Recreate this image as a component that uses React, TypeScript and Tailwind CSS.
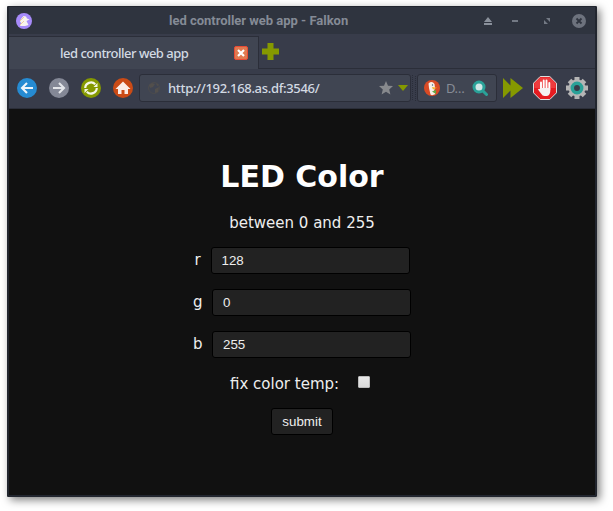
import React from "react";

const Disc = ({ color, children }: { color: string; children: React.ReactNode }) => (
  <svg width="20" height="20" viewBox="0 0 20 20" className="shrink-0">
    <circle cx="10" cy="10" r="10" fill={color} />
    {children}
  </svg>
);

function TitleBar() {
  return (
    <header className="flex h-[27px] shrink-0 items-center bg-[#2f343f] pl-[7px] pr-[9px]">
      <svg width="16" height="16" viewBox="0 0 16 16" className="shrink-0">
        <circle cx="8" cy="8" r="8" fill="#a78bfa" />
        <path d="M5 6 7.500 3 10 3.500 11 5.500 13.500 6.500 10.500 8 12.500 12 9 13H4l1.500-3L4 9z" fill="#f8f4ee" />
        <path d="m4 8 4-4M4 12l4-4" stroke="#efcf9d" />
      </svg>
      <h2 className="ml-[137px] w-[184px] whitespace-nowrap font-['Roboto',sans-serif] text-[13px] font-bold leading-[27px] tracking-[-0.02px] text-[#858b96]">
        led controller web app - Falkon
      </h2>
      <div className="ml-auto flex items-center text-[#737984]">
        <svg width="8" height="8" viewBox="0 0 8 8" fill="#8a909b"><path d="M4 0 8 5H0zM0 6h8v2H0z" /></svg>
        <svg width="6" height="8" viewBox="0 0 6 8" fill="currentColor" className="ml-5"><path d="M0 3h6v2H0z" /></svg>
        <svg width="6" height="6" viewBox="0 0 6 6" fill="currentColor" className="ml-[26px]"><path d="M2 0h4v4zM0 2v4h4z" /></svg>
        <svg width="14" height="14" viewBox="0 0 14 14" className="ml-[22px]">
          <circle cx="7" cy="7" r="7" fill="#6d727d" />
          <path d="m4.500 4.500 5 5m0-5-5 5" stroke="#2f343f" strokeWidth="1.800" />
        </svg>
      </div>
    </header>
  );
}

function TabBar() {
  return (
    <div className="flex h-[35px] shrink-0 border-b border-[#2b2e39] bg-[#383c4a] pt-[2px]">
      <div className="-mb-px flex h-[33px] w-[250px] items-center border-r border-t border-[#2b2e39] bg-[#404552] pl-[51px] pr-[10px]">
        <span className="mt-px whitespace-nowrap font-['Noto_Sans',sans-serif] text-[13px] font-medium tracking-[-0.5px] text-[#d3dae3]">led controller web app</span>
        <svg width="14" height="14" viewBox="0 0 14 14" className="ml-auto">
          <rect x=".5" y=".5" width="13" height="13" rx="1.500" fill="#e07a50" stroke="#e94b35" />
          <path d="m4 4 6 6m0-6-6 6" stroke="#fff" strokeWidth="2.200" />
        </svg>
      </div>
      <svg width="17" height="17" viewBox="0 0 17 17" className="ml-[3px] mt-[7px]" fill="#859900"><path d="M5.500 0h6v5.500h5.500v6h-5.500v5.500h-6v-5.500H0v-6h5.500z" /></svg>
    </div>
  );
}

function NavBar() {
  return (
    <nav className="flex h-10 shrink-0 items-center border-b border-[#2b2e39] bg-[#383c4a] pb-px pl-2">
      <div className="flex gap-3">
        <Disc color="#268bd2">
          <path d="M16 10H5m5-5-5 5 5 5" fill="none" stroke="#eef5fa" strokeWidth="2.100" />
        </Disc>
        <Disc color="#848896">
          <path d="M4 10h11m-5-5 5 5-5 5" fill="none" stroke="#e3e5e9" strokeWidth="2.100" />
        </Disc>
        <Disc color="#859900">
          <path d="M4.200 10A5.800 5.800 0 0 1 14.200 6.300M15.800 10A5.800 5.800 0 0 1 5.800 13.700" fill="none" stroke="#f4f6e6" strokeWidth="2.200" />
          <path d="M16.500 5v4h-4zM3.500 15v-4h4z" fill="#f4f6e6" />
        </Disc>
        <Disc color="#cb4b16">
          <path d="M10 3.500 17.500 11H15v5h-3.500v-4h-3v4H5v-5H2.500z" fill="#fcede7" />
        </Disc>
      </div>
      <div className="ml-[6px] flex h-7 w-[272px] items-center rounded-[3px] border border-[#2b2e39] bg-[#404552] pl-[7px] pr-[2px]">
        <svg width="14" height="14" viewBox="0 0 14 14">
          <circle cx="7" cy="7" r="5.500" fill="none" stroke="#4b4b4d" />
          <path d="M2 4 5 2l3 1-2 3-3 1zm6 4 4-2-1 5-3 1zM9 2l3 2-2 1z" fill="#524f4c" />
        </svg>
        <span className="ml-[7px] mt-[2px] whitespace-nowrap font-['Noto_Sans',sans-serif] text-[13px] font-medium tracking-[-0.32px] text-[#d3dae3]">http://192.168.as.df:3546/</span>
        <svg width="14" height="14" viewBox="0 0 14 14" className="ml-auto" fill="#87898d"><path d="m7 0 2 4.700 5 .4-3.800 3.300 1.200 5.100L7 10.800l-4.400 2.700 1.200-5.100L0 5.100l5-.4z" /></svg>
        <svg width="10" height="6" viewBox="0 0 10 6" className="ml-[5px]" fill="#859900"><path d="M0 0h10L5 6z" /></svg>
      </div>
      <svg width="4" height="28" viewBox="0 0 4 28" className="ml-px">
        <path d="M.5 1v26M3.500 2v25" stroke="#292d38" strokeDasharray="1 1" />
      </svg>
      <div className="ml-px flex h-7 w-[80px] items-center rounded-[3px] border border-[#2b2e39] bg-[#404552] pl-[6px] pr-[8px]">
        <svg width="16" height="16" viewBox="0 0 16 16">
          <circle cx="8" cy="8" r="8" fill="#d94a24" />
          <path d="M4.500 3.500Q8 .5 10.500 4L11 8l-1 3 1.500 3Q8 16 6.500 14.500L5 8z" fill="#f8eee6" />
          <path d="m8 7 5 .7L9 9.500z" fill="#f4b42e" /><path d="m8 11.500 4-1.500v4z" fill="#62a744" /><circle cx="8.500" cy="5" r=".7" fill="#365b76" />
        </svg>
        <span className="ml-[6px] mt-[2px] font-['Noto_Sans',sans-serif] text-[13px] tracking-[-0.4px] text-[#878c96]">D…</span>
        <svg width="16" height="16" viewBox="0 0 16 16" className="ml-auto">
          <path d="m10 10 4.500 4.500" stroke="#2aa198" strokeWidth="3" strokeLinecap="round" />
          <circle cx="7" cy="7" r="5" fill="#d0e6e6" stroke="#2aa198" strokeWidth="3" />
        </svg>
      </div>
      <svg width="20" height="20" viewBox="0 0 20 20" className="ml-[6px]" fill="#859900"><path d="M0 0 7.500 7.500V0L20 10 7.500 20v-7.500L0 20z" /></svg>
      <svg width="24" height="24" viewBox="0 0 24 24" className="ml-[10px]">
        <path d="M7.200.5h9.600l6.700 6.700v9.600l-6.700 6.700H7.200L.5 16.800V7.200z" fill="#e51b20" stroke="#ddd" />
        <path d="M7.100 1.500h9.800l5.600 5.700V12h-21V7.200z" fill="#f25353" opacity=".6" />
        <path d="M8 14V6.500M10.700 13V4.500M13.500 13V4.500M16.300 14V7" stroke="#fff" strokeWidth="1.900" strokeLinecap="round" />
        <path d="M7 12h10.200v4q-.7 4-3.700 4h-2q-2 0-3.500-2.500L5 13.500q1-1.500 3 .5z" fill="#f5f1f1" />
      </svg>
      <svg width="22" height="22" viewBox="0 0 22 22" className="ml-[9px]">
        <g stroke="#b5b5b5" strokeWidth="5"><path d="M11 0v22M0 11h22M3.500 3.500l15 15M18.500 3.500l-15 15" /></g>
        <circle cx="11" cy="11" r="8.500" fill="#b5b5b5" />
        <circle cx="11" cy="11" r="4.700" fill="#383c4a" stroke="#2aa198" strokeWidth="3.500" />
      </svg>
    </nav>
  );
}

const inputClass = "h-[27px] w-[199px] rounded-[3px] border border-black bg-[#222] font-['Liberation_Sans',sans-serif] text-[13.333px] text-[#eee] outline-none";

function ColorForm() {
  return (
    <form className="flex flex-1 flex-col bg-[#111] font-['DejaVu_Sans',sans-serif] text-[15px] leading-5 text-[#eee]">
      <h1 className="mt-[50px] h-9 text-center text-[30px] font-bold leading-9 text-white">LED Color</h1>
      <p className="mt-[18px] h-5 text-center">between 0 and 255</p>
      <label className="ml-[185px] mt-[14px] flex h-[27px]">
        <span className="w-[17px] pl-[0.5px] pt-[3px]">r</span><input className={`${inputClass} px-[9.5px]`} defaultValue="128" />
      </label>
      <label className="ml-[184px] mt-[15px] flex h-[27px]">
        <span className="w-[19px] pt-[3px]">g</span><input className={`${inputClass} px-[10px]`} defaultValue="0" />
      </label>
      <label className="ml-[184px] mt-[15px] flex h-[27px]">
        <span className="w-[19px] pt-[3px]">b</span><input className={`${inputClass} px-[10px]`} defaultValue="255" />
      </label>
      <label className="ml-[221px] mt-[16px] flex h-5">
        <span className="w-[128px] whitespace-nowrap">fix color temp:</span>
        <input type="checkbox" className="mt-[2px] h-3 w-3 appearance-none rounded-[1px] border border-[#bbb] bg-gradient-to-b from-[#e8e8e8] to-[#dadada]" />
      </label>
      <button type="button" className="ml-[262px] mt-[14px] h-[27px] w-[62px] rounded-[3px] border border-black bg-[#222] font-['Liberation_Sans',sans-serif] text-[13.333px] text-[#eee]">submit</button>
    </form>
  );
}

export default function App() {
  return (
    <div className="h-[511px] w-[613px] overflow-hidden bg-white pl-[7px] pt-[6px]">
      <div className="flex h-[491px] w-[590px] flex-col overflow-hidden rounded-[1px] border-x-2 border-b-2 border-t border-[#22262f] shadow-[3px_3px_8px_0px_rgba(0,0,0,0.5)]">
        <TitleBar />
        <TabBar />
        <NavBar />
        <ColorForm />
      </div>
    </div>
  );
}
